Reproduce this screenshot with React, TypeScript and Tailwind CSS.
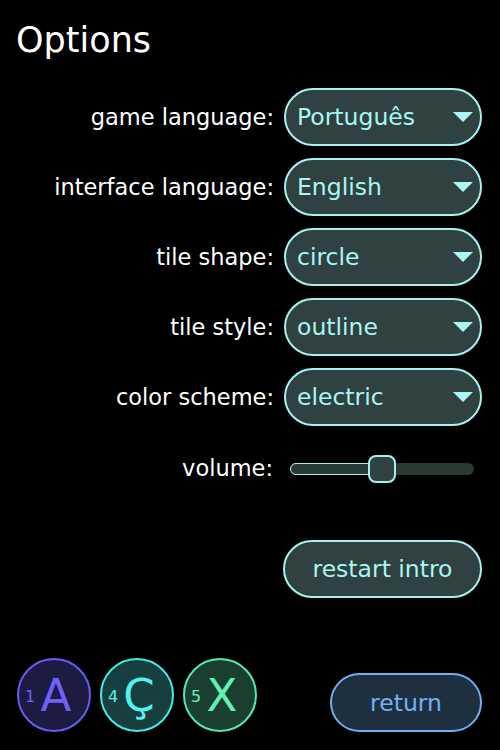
const font = { fontFamily: '"DejaVu Sans", "Open Sans", sans-serif' };

function Select({ value }: { value: string }) {
  return (
    <div className="flex h-[58px] w-[198px] items-center justify-between rounded-full border-2 border-[#a6f2ee] bg-[#2f4141] pl-[11px] pr-[6px]">
      <span className="pt-[2px] text-[23.5px] text-[#aaf6f2]">{value}</span>
      <svg width="22" height="12" viewBox="0 0 22 12">
        <path d="M1 1 L21 1 L11 11 Z" fill="#aaf6f2" />
      </svg>
    </div>
  );
}

const rows = [
  ['game language:', 'Português'],
  ['interface language:', 'English'],
  ['tile shape:', 'circle'],
  ['tile style:', 'outline'],
  ['color scheme:', 'electric'],
];

function Tile({ n, ch, cls }: { n: string; ch: string; cls: string }) {
  return (
    <div className={`relative flex h-[74px] w-[74px] items-center justify-center rounded-full border-2 ${cls}`}>
      <span className="absolute left-[6px] top-[29px] text-[16px] leading-none">{n}</span>
      <span className="pl-[4px] text-[45px] leading-none">{ch}</span>
    </div>
  );
}

export default function App() {
  return (
    <div className="relative h-[750px] w-[500px] bg-black text-white" style={font}>
      <h1 className="pl-[16px] pt-[18px] text-[35px] leading-[44px]">Options</h1>

      <div className="mt-[26px] flex flex-col gap-[12px] pr-[18px]">
        {rows.map(([label, value]) => (
          <div key={label} className="flex items-center justify-end gap-[10px]">
            <span className="pt-[2px] text-[22.5px]">{label}</span>
            <Select value={value} />
          </div>
        ))}
        <div className="mt-[8px] flex h-[46px] items-center justify-end gap-[17px] pr-[8px]">
          <span className="text-[22.5px]">volume:</span>
          <div className="relative h-[12px] w-[184px]">
            <div className="absolute inset-0 rounded-full bg-[#2a3a2e]" />
            <div className="absolute left-0 top-0 h-[12px] w-[90px] rounded-full border-[1.5px] border-[#a6f2ee] bg-[#283a3a]" />
            <div className="absolute left-[78px] top-[-8px] h-[28px] w-[28px] rounded-[8px] border-2 border-[#a6f2ee] bg-[#2f4141]" />
          </div>
        </div>
      </div>

      <div className="mt-[48px] flex justify-end pr-[18px]">
        <button className="h-[58px] w-[199px] rounded-full border-2 border-[#a6f2ee] bg-[#2f4141] pt-[2px] text-[23.5px] text-[#aaf6f2]">
          restart intro
        </button>
      </div>

      <div className="absolute bottom-[18px] left-[17px] right-[18px] flex items-end justify-between">
        <div className="flex gap-[9px]">
          <Tile n="1" ch="A" cls="border-[#6b5cf2] bg-[#1c1b42] text-[#6d62fa]" />
          <Tile n="4" ch="Ç" cls="border-[#45ebe3] bg-[#183f40] text-[#52f2ee]" />
          <Tile n="5" ch="X" cls="border-[#55e8ac] bg-[#1a3f30] text-[#60f2b4]" />
        </div>
        <button className="h-[59px] w-[152px] rounded-full border-2 border-[#6fb0f0] bg-[#1e2f40] pt-[2px] text-[23.5px] text-[#72b2f2]">
          return
        </button>
      </div>
    </div>
  );
}
